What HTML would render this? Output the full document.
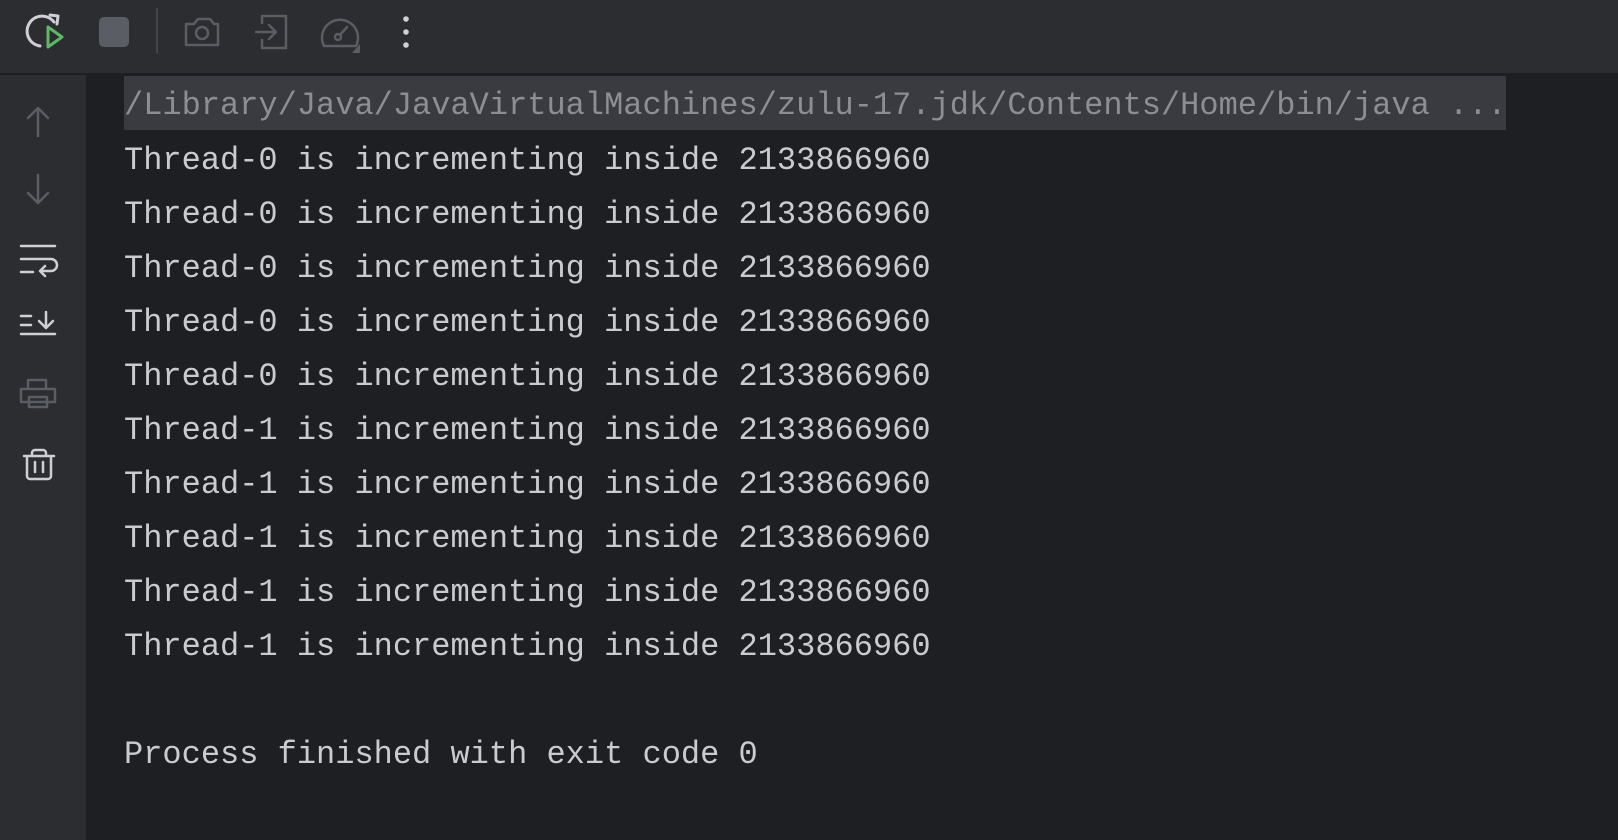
<!DOCTYPE html>
<html><head><style>
body{margin:0;width:1618px;height:840px;background:#1e1f22;overflow:hidden;font-family:"Liberation Mono",monospace;position:relative}
#tb{position:absolute;left:0;top:0;width:1618px;height:73px;background:#2b2d30;border-bottom:2px solid #1e1f22}
#sb{position:absolute;left:0;top:75px;width:86px;height:765px;background:#2b2d30}
svg{position:absolute;overflow:visible}
.l{position:absolute;left:124px;font-size:32px;color:#c9cbcf;white-space:pre;line-height:54px;height:54px}
#hdr{position:absolute;left:124px;top:76px;width:1382px;height:54px;background:#393b40}
</style></head><body>
<div id="tb"></div><div id="sb"></div>
<svg style="left:0;top:0" width="430" height="73" fill="none" stroke-width="3" stroke-linecap="round" stroke-linejoin="round">
<path d="M54 22 A15 15 0 1 0 40 46" stroke="#ced0d6"/>
<path d="M50 15 L58 16 L57 24" stroke="#ced0d6"/>
<path d="M48 27 L62 37 L48 47 Z" stroke="#5fb865"/>
<rect x="99" y="17" width="30" height="30" rx="5" fill="#5a5d63" stroke="none"/>
<line x1="157" y1="9" x2="157" y2="53" stroke="#43454a" stroke-width="2"/>
<path d="M186 24 h8 l4-5 h12 l4 5 h4 v21 h-32 z" stroke="#5a5d63" stroke-width="2.5"/>
<circle cx="202" cy="33" r="6" stroke="#5a5d63" stroke-width="2.5"/>
<path d="M262 16 h24 v32 h-24 v-8 M262 23 v-7 M256 32 h20 M269 25 l7 7 -7 7" stroke="#5a5d63" stroke-width="2.5"/>
<path d="M324 46 A18 18 0 1 1 356 46 Z" stroke="#5a5d63" stroke-width="2.5"/>
<circle cx="338" cy="37" r="3" stroke="#5a5d63" stroke-width="2.5"/>
<path d="M340 35 L347 27" stroke="#5a5d63" stroke-width="2.5"/>
<path d="M360 44 v9 h-8 z" fill="#5a5d63" stroke="none"/>
<circle cx="406" cy="19" r="2.8" fill="#ced0d6" stroke="none"/>
<circle cx="406" cy="32" r="2.8" fill="#ced0d6" stroke="none"/>
<circle cx="406" cy="45" r="2.8" fill="#ced0d6" stroke="none"/>
</svg>
<svg style="left:0;top:75px" width="86" height="440" fill="none" stroke-width="2.5" stroke-linecap="round" stroke-linejoin="round">
<path d="M38 61 V33 M28 43 L38 33 48 43" stroke="#5a5d63"/>
<path d="M38 100 V128 M28 118 L38 128 48 118" stroke="#5a5d63"/>
<path d="M21 171 h34 M21 184 h30 a6 6 0 0 1 0 12 h-10 M45 191 l-5 5 5 5 M21 197 h12" stroke="#ced0d6"/>
<path d="M21 241 h10 M21 250 h10 M21 259 h34 M46 237 v16 M39 246 l7 7 7-7" stroke="#ced0d6"/>
<path d="M28 314 v-9 h18 v9 M21 327 v-13 h34 v13 z M29 322 h18 v10 h-18 z" stroke="#5a5d63"/>
<path d="M24 381 h30 M32 381 v-3 a3 3 0 0 1 3-3 h8 a3 3 0 0 1 3 3 v3 M27 381 v20 a3 3 0 0 0 3 3 h18 a3 3 0 0 0 3-3 v-20 M35 387 v10 M43 387 v10" stroke="#ced0d6"/>
</svg>
<div id="hdr"></div>
<div class="l" style="top:79px;color:#8c8e93">/Library/Java/JavaVirtualMachines/zulu-17.jdk/Contents/Home/bin/java ...</div>
<div class="l" style="top:134px">Thread-0 is incrementing inside 2133866960</div>
<div class="l" style="top:188px">Thread-0 is incrementing inside 2133866960</div>
<div class="l" style="top:242px">Thread-0 is incrementing inside 2133866960</div>
<div class="l" style="top:296px">Thread-0 is incrementing inside 2133866960</div>
<div class="l" style="top:350px">Thread-0 is incrementing inside 2133866960</div>
<div class="l" style="top:404px">Thread-1 is incrementing inside 2133866960</div>
<div class="l" style="top:458px">Thread-1 is incrementing inside 2133866960</div>
<div class="l" style="top:512px">Thread-1 is incrementing inside 2133866960</div>
<div class="l" style="top:566px">Thread-1 is incrementing inside 2133866960</div>
<div class="l" style="top:620px">Thread-1 is incrementing inside 2133866960</div>
<div class="l" style="top:728px">Process finished with exit code 0</div>
</body></html>
